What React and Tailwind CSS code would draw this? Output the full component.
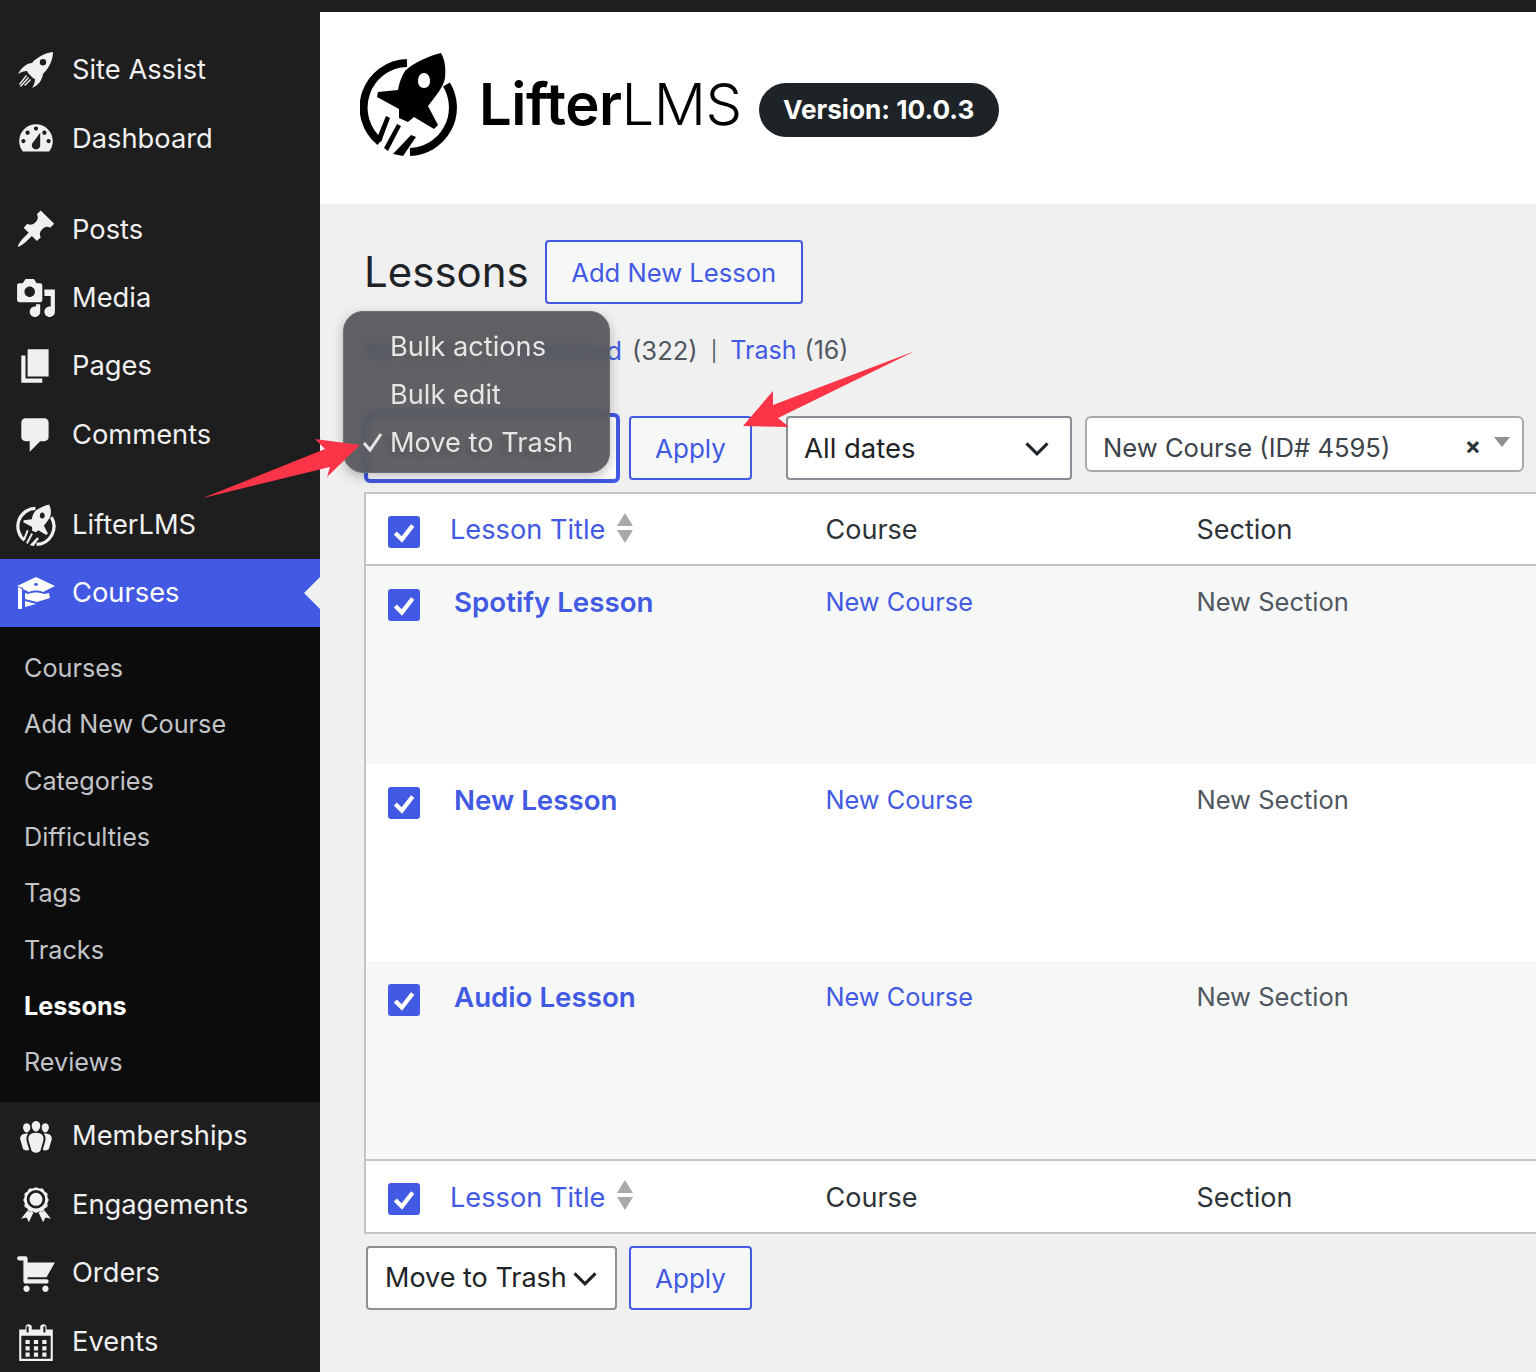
import React from "react";

const D = ({ d, className = "" }) => (
  <svg viewBox="0 0 20 20" className={`w-[42px] h-[42px] ${className}`} fill="#f0f0f1" fillRule="evenodd">
    <path d={d} />
  </svg>
);

const icons = {
  dashboard: "M3.76 16h12.48c1.1-1.37 1.76-3.11 1.76-5 0-4.42-3.58-8-8-8s-8 3.58-8 8c0 1.89.66 3.63 1.76 5zM10 4c.55 0 1 .45 1 1s-.45 1-1 1-1-.45-1-1 .45-1 1-1zM6 6c.55 0 1 .45 1 1s-.45 1-1 1-1-.45-1-1 .45-1 1-1zm8 0c.55 0 1 .45 1 1s-.45 1-1 1-1-.45-1-1 .45-1 1-1zm-5.37 5.55L12 7v6c0 1.1-.9 2-2 2s-2-.9-2-2c0-.57.24-1.08.63-1.45zM4 10c.55 0 1 .45 1 1s-.45 1-1 1-1-.45-1-1 .45-1 1-1zm12 0c.55 0 1 .45 1 1s-.45 1-1 1-1-.45-1-1 .45-1 1-1z",
  post: "M10.44 3.02l1.82-1.82 6.36 6.35-1.83 1.82c-1.05-.68-2.48-.57-3.41.36l-.75.75c-.92.93-1.04 2.35-.35 3.41l-1.83 1.82-2.41-2.41-2.8 2.79c-.42.42-3.38 2.71-3.8 2.29s1.86-3.39 2.28-3.81l2.79-2.79L4.1 9.36l1.83-1.82c1.05.69 2.48.57 3.4-.36l.75-.75c.93-.92 1.05-2.35.36-3.41z",
  media: "M13 11V4c0-.55-.45-1-1-1h-1.67L9 1H5L3.67 3H2c-.55 0-1 .45-1 1v7c0 .55.45 1 1 1h10c.55 0 1-.45 1-1zM7 4.5c1.38 0 2.5 1.12 2.5 2.5S8.38 9.5 7 9.5 4.5 8.38 4.5 7 5.62 4.5 7 4.5zM14 6h5v10.5c0 1.38-1.12 2.5-2.5 2.5S14 17.88 14 16.5s1.12-2.5 2.5-2.5c.17 0 .34.02.5.05V9h-3V6zm-4 8.05V13h2v3.5c0 1.38-1.12 2.5-2.5 2.5S7 17.88 7 16.5 8.12 14 9.5 14c.17 0 .34.02.5.05z",
  page: "M6 15V2h10v13H6zm-1 1h8v2H3V5h2v11z",
  comments: "M5 2h9c1.1 0 2 .9 2 2v7c0 1.1-.9 2-2 2h-2l-5 5v-5H5c-1.1 0-2-.9-2-2V4c0-1.1.9-2 2-2z",
  groups: "M8.03 4.46c-.29 1.28.55 3.46 1.97 3.46 1.41 0 2.25-2.18 1.96-3.46-.22-.98-1.08-1.63-1.96-1.63-.89 0-1.74.65-1.97 1.63zm-4.13.9c-.25 1.08.47 2.93 1.67 2.93s1.92-1.85 1.67-2.93c-.19-.83-.92-1.39-1.67-1.39s-1.48.56-1.67 1.39zm8.86 0c-.25 1.08.47 2.93 1.66 2.93 1.2 0 1.92-1.85 1.67-2.93-.19-.83-.92-1.39-1.67-1.39-.74 0-1.47.56-1.66 1.39zm-.59 11.43l1.25-4.3C14.2 10 12.71 8.47 10 8.47c-2.72 0-4.21 1.53-3.44 4.02l1.26 4.3C8.05 17.51 9 18 10 18c.98 0 1.94-.49 2.17-1.21zm-6.1-7.63c-.49.67-.96 1.83-.42 3.59l1.12 3.79c-.34.2-.77.31-1.2.31-.85 0-1.65-.41-1.85-1.03l-1.07-3.65c-.65-2.11.61-3.4 2.92-3.4.27 0 .54.02.79.06-.1.1-.2.22-.29.33zm8.35-.39c2.31 0 3.58 1.29 2.92 3.4l-1.07 3.65c-.2.62-1 1.03-1.85 1.03-.43 0-.86-.11-1.2-.31l1.11-3.77c.55-1.78.08-2.94-.42-3.61-.08-.11-.18-.23-.28-.33.25-.04.51-.06.79-.06z",
  awards: "M10 1.5l1.6.7 1.7-.1.8 1.5 1.4.9-.1 1.7.7 1.4-.7 1.5.1 1.7-1.4.9-.8 1.5-1.7-.1-1.6.7-1.6-.7-1.7.1-.8-1.5-1.4-.9.1-1.7-.7-1.5.7-1.4-.1-1.7 1.4-.9.8-1.5 1.7.1zM10 2.9a4.4 4.4 0 1 0 0 8.8 4.4 4.4 0 1 0 0-8.8zM10 4.2a3.1 3.1 0 1 1 0 6.2 3.1 3.1 0 1 1 0-6.2zM6 12.6l2.8 1-2.2 4.6-1.1-2.2-2.6.6zM14 12.6l-2.8 1 2.2 4.6 1.1-2.2 2.6.6z",
  cart: "M6 13h9c.55 0 1 .45 1 1s-.45 1-1 1H5c-.55 0-1-.45-1-1V4H2c-.55 0-1-.45-1-1s.45-1 1-1h3c.55 0 1 .45 1 1v2h13l-4 7H6v1zm-.5 3c.83 0 1.5.67 1.5 1.5S6.33 19 5.5 19 4 18.33 4 17.5 4.67 16 5.5 16zm9 0c.83 0 1.5.67 1.5 1.5s-.67 1.5-1.5 1.5-1.5-.67-1.5-1.5.67-1.5 1.5-1.5z",
  calendar: "M15 4h3v15H2V4h3V3c0-.41.15-.76.44-1.06.29-.29.65-.44 1.06-.44s.77.15 1.06.44c.29.3.44.65.44 1.06v1h4V3c0-.41.15-.76.44-1.06.29-.29.65-.44 1.06-.44s.77.15 1.06.44c.29.3.44.65.44 1.06v1zM6 5.5c.28 0 .5-.22.5-.5V3c0-.28-.22-.5-.5-.5s-.5.22-.5.5v2c0 .28.22.5.5.5zm8 0c.28 0 .5-.22.5-.5V3c0-.28-.22-.5-.5-.5s-.5.22-.5.5v2c0 .28.22.5.5.5zM17 18V7H3v11h14zM7 9v2H5V9h2zm2 0h2v2H9V9zm4 2V9h2v2h-2zm-6 1v2H5v-2h2zm2 0h2v2H9v-2zm4 2v-2h2v2h-2zm-6 1v2H5v-2h2zm4 2H9v-2h2v2zm4 0h-2v-2h2v2z",
};

const SiteRocket = () => (
  <svg viewBox="0 0 36 36" className="w-[36px] h-[36px]" fill="#f0f0f1">
    <path
      fillRule="evenodd"
      d="M35 0C27 1 19 5 14 11C9 11 4 15 0 22C3 20 6 19 9 19L10 21L15 26L17 27C17 30 16 33 14 36C21 33 24 28 25 22C31 16 35 8 35 0ZM25 7A3.2 3.2 0 1 1 25 13.4A3.2 3.2 0 1 1 25 7Z"
    />
    <path d="M8 23L9 24L2 33L1 32ZM10 25L11 26L3 35L2 34ZM12 27L13 28L7 34L6 33Z" />
  </svg>
);

const LifterMark = ({ className, color }) => (
  <svg viewBox="0 0 97 104" className={className} fill={color}>
    <path d="M47 11A44.5 44.5 0 0 0 20 90" fill="none" stroke={color} strokeWidth="8" />
    <path d="M86.5 32.5A44.5 44.5 0 0 1 50 100" fill="none" stroke={color} strokeWidth="8" />
    <path d="M81 1C71 3 53 11 45 19C41 25 39 32 38 38L18 40L17 45L39 57L39 66L48 70L54 65L74 77L78 73L68 54C76 44 84 34 85 26C86 16 85 8 81 1ZM64 21C68 21 70 25 70 29C70 33 68 36 64 36C60 36 58 33 58 29C58 25 60 21 64 21Z" fillRule="evenodd" />
    <path d="M26 64L30 66L21 90L17 86Z" />
    <path d="M37 72L41 74L28 99L24 96Z" />
    <path d="M51 83L56 85L43 104L33 102Z" />
  </svg>
);

const Cap = () => (
  <svg viewBox="0 0 39 32" className="w-[39px] h-[32px]" fill="#fff">
    <path
      fillRule="evenodd"
      d="M19 0L38 9L26 15C22 13 16 13 12 15L6 12L6 11L3 10L0 9ZM19 6A2 1.4 0 1 0 19 8.8A2 1.4 0 1 0 19 6Z"
    />
    <path d="M1 10L5 12V32H1Z" />
    <path d="M8 16L11 17C16 15 22 15 27 17L32 16L33 21L20 25L8 22Z" />
    <path d="M8 24L19 27L8 30Z" />
  </svg>
);

const Item = ({ icon, label, active }) => (
  <div className={`relative flex items-center pl-[15px] text-[27.3px] ${active ? "h-[68px] bg-[#4159e3] text-white" : "h-[68.4px] text-[#f0f0f1]"}`}>
    <div className="w-[42px] h-[42px] flex items-center justify-center shrink-0">{icon}</div>
    <span className="ml-[15px] mt-[1px]">{label}</span>
    {active && (
      <span className="absolute right-0 top-1/2 -translate-y-1/2 w-0 h-0 border-y-[16px] border-y-transparent border-r-[16px] border-r-[#f0f0f1]" />
    )}
  </div>
);

const Sidebar = () => (
  <aside className="w-[320px] shrink-0 bg-[#1e1e1e] pt-[24px]">
    <Item label="Site Assist" icon={<SiteRocket />} />
    <Item label="Dashboard" icon={<D d={icons.dashboard} />} />
    <div className="h-[22.5px]" />
    <Item label="Posts" icon={<D d={icons.post} />} />
    <Item label="Media" icon={<D d={icons.media} />} />
    <Item label="Pages" icon={<D d={icons.page} />} />
    <Item label="Comments" icon={<D d={icons.comments} />} />
    <div className="h-[22px]" />
    <Item label="LifterLMS" icon={<LifterMark className="w-[40px] h-[42px]" color="#f0f0f1" />} />
    <Item active label="Courses" icon={<Cap />} />
    <div className="bg-[#0c0c0c] pt-[13.4px] h-[475px]">
      {["Courses", "Add New Course", "Categories", "Difficulties", "Tags", "Tracks", "Lessons", "Reviews"].map((s) => (
        <div key={s} className={`h-[56.33px] flex items-center pl-[24px] text-[25.2px] ${s === "Lessons" ? "text-white font-bold" : "text-[#c3c4c7]"}`}>
          {s}
        </div>
      ))}
    </div>
    <Item label="Memberships" icon={<D d={icons.groups} />} />
    <Item label="Engagements" icon={<D d={icons.awards} />} />
    <Item label="Orders" icon={<D d={icons.cart} />} />
    <Item label="Events" icon={<D d={icons.calendar} />} />
  </aside>
);

const Check = () => (
  <div className="w-8 h-8 shrink-0 rounded-[3px] bg-[#4159e3] flex items-center justify-center">
    <svg viewBox="0 0 24 24" className="w-[26px] h-[26px]" fill="none" stroke="#fff" strokeWidth="4">
      <path d="M4 13L10 19L20 6" />
    </svg>
  </div>
);

const Sort = () => (
  <div className="flex flex-col gap-[4px] ml-[12px] -mt-[3px]">
    <div className="w-0 h-0 border-x-[8px] border-x-transparent border-b-[13px] border-b-[#a7aaad]" />
    <div className="w-0 h-0 border-x-[8px] border-x-transparent border-t-[13px] border-t-[#a7aaad]" />
  </div>
);

const HeadRow = ({ className, textClass = "" }) => (
  <div className={`grid grid-cols-[459.5px_371px_1fr] bg-white ${className}`}>
    <div className="flex items-center pl-[22px]">
      <div className="mt-[5px]"><Check /></div>
      <span className={`ml-[30px] text-[#4159e3] text-[27.2px] ${textClass}`}>Lesson Title</span>
      <Sort />
    </div>
    <div className={`flex items-center text-[27px] text-[#2c3338] ${textClass}`}>Course</div>
    <div className={`flex items-center text-[27px] text-[#2c3338] ${textClass}`}>Section</div>
  </div>
);

const Row = ({ title, alt, h }) => (
  <div className={`grid grid-cols-[459.5px_371px_1fr] ${h} ${alt ? "bg-[#f6f7f7]" : "bg-white"}`}>
    <div className="flex items-start pl-[22px] pt-[23px]">
      <Check />
      <a className="ml-[34px] -mt-[7px] text-[#4159e3] text-[27.7px] font-semibold">{title}</a>
    </div>
    <div className="pt-[17px] text-[#4159e3] text-[25.3px]">New Course</div>
    <div className="pt-[17px] text-[#50575e] text-[25.5px]">New Section</div>
  </div>
);

const Chevron = ({ className = "" }) => (
  <svg viewBox="0 0 24 24" className={`w-[28px] h-[28px] shrink-0 ${className}`} fill="none" stroke="#1d2327" strokeWidth="2.6">
    <path d="M3 8L12 17L21 8" />
  </svg>
);

const Apply = () => (
  <button className="w-[123px] h-16 border-2 border-[#4159e3] rounded-[4px] text-[#4159e3] text-[26px] flex items-center justify-center bg-[#f6f7f7]">
    Apply
  </button>
);

const Main = () => (
  <main className="flex-1 min-w-0 bg-[#f0f0f1] relative">
    <header className="h-[192px] bg-white flex items-center pl-[40px]">
      <LifterMark className="w-[97px] h-[104px] -mt-[8px]" color="#000" />
      <div className="ml-[22px] text-[58px] leading-none tracking-[-0.5px] text-black -mt-[8px]">
        <span className="font-semibold">Lifter</span><span className="font-light">LMS</span>
      </div>
      <div className="ml-[17px] mt-[4px] h-[54px] w-[240px] rounded-full bg-[#1d2327] text-white font-bold text-[26.2px] flex items-center justify-center">
        Version: 10.0.3
      </div>
    </header>

    <div className="pl-[45px]">
      <div className="flex items-center pt-[36px]">
        <h1 className="text-[42px] leading-[64px] text-[#1d2327] -ml-[1px]">Lessons</h1>
        <button className="ml-[16px] w-[258px] h-16 border-2 border-[#4159e3] rounded-[4px] text-[#4159e3] text-[25.6px] bg-[#f6f7f7] pt-[2px]">
          Add New Lesson
        </button>
      </div>

      <div className="mt-[27px] h-[40px] flex items-center text-[25.6px] text-[#50575e] whitespace-pre">
        <div className="w-[257px] flex justify-end">
          <span className="text-[#4159e3]">All</span> (338)  |  <span className="text-[#4159e3]">Published</span>
        </div>
        <span className="ml-[10px]">(322)</span>
        <span className="ml-[13px] text-[20px]">|</span>
        <span className="ml-[13px] text-[#4159e3] text-[25px]">Trash</span>
        <span className="ml-[8px] text-[25px]">(16)</span>
      </div>

      <div className="flex items-start mt-[45px] h-[64px]">
        <div className="w-[256px] h-[70px] -ml-[1px] -mt-[3px] border-[4px] border-[#4159e3] rounded-[6px] bg-white shrink-0 flex items-center pl-[18px] text-[27px] text-[#1d2327] whitespace-nowrap">
          Move to Trash
        </div>
        <div className="ml-[9px]"><Apply /></div>
        <div className="ml-[34px] w-[286px] h-16 border-2 border-[#8c8f94] rounded-[4px] bg-white flex items-center justify-between pl-[16px] pr-[19px] text-[27.5px] text-[#1d2327]">
          <span className="mt-[2px]">All dates</span> <Chevron />
        </div>
        <div className="ml-[13px] w-[439px] h-[56px] border-2 border-[#a7aaad] rounded-[6px] bg-white flex items-center pl-[16px] pr-[12px] text-[25.6px] text-[#3c434a]">
          <span className="flex-1 mt-[8px]">New Course (ID# 4595)</span>
          <span className="font-bold text-[#2c3338] text-[24px] mr-[13px] mt-[3px]">×</span>
          <div className="w-0 h-0 border-x-[8px] border-x-transparent border-t-[10px] border-t-[#8c8f94] -mt-[4px]" />
        </div>
      </div>

      <div className="mt-[12px] -ml-[1px] border-y-2 border-l-2 border-[#c3c4c7]">
        <HeadRow className="h-[72px] border-b-2 border-[#c3c4c7]" textClass="mt-[3px]" />
        <Row title="Spotify Lesson" alt h="h-[198px]" />
        <Row title="New Lesson" h="h-[197px]" />
        <Row title="Audio Lesson" alt h="h-[198px]" />
        <HeadRow className="h-[73px] border-t-2 border-[#c3c4c7]" textClass="mt-[3px]" />
      </div>

      <div className="flex items-start mt-[12px] pl-[1px]">
        <div className="w-[251px] h-16 border-2 border-[#8c8f94] rounded-[4px] bg-white flex items-center pl-[17px] text-[27px] text-[#1d2327] whitespace-nowrap">
          Move to Trash<Chevron className="ml-[4px]" />
        </div>
        <div className="ml-[12px]"><Apply /></div>
      </div>
    </div>
  </main>
);

const Overlays = () => (
  <>
    <div className="absolute left-[343px] top-[311px] w-[267px] h-[162px] rounded-[20px] bg-[#505154]/90 backdrop-blur-[4px] border border-[#6d6e72] shadow-[0_4px_12px_rgba(0,0,0,0.25)] text-[#e6e6e6] text-[27.2px] pt-[11px]">
      <div className="h-[48px] flex items-center pl-[46px]">Bulk actions</div>
      <div className="h-[48px] flex items-center pl-[46px]">Bulk edit</div>
      <div className="h-[48px] flex items-center pl-[46px] relative">
        <svg viewBox="0 0 20 20" className="absolute left-[19px] top-[12px] w-[20px] h-[22px]" fill="none" stroke="#e6e6e6" strokeWidth="3">
          <path d="M1 11L7 18L18 2" />
        </svg>
        Move to Trash
      </div>
    </div>
    <svg className="absolute left-0 top-0 w-[1536px] h-[1372px] pointer-events-none" viewBox="0 0 1536 1372" fill="#fb3447">
      <polygon points="203,498 325,449 315,439 360,445 327,477 330,467" />
      <polygon points="915,351 773,405 773,391 743,426 789,427 778,418" />
    </svg>
  </>
);

export default function App() {
  return (
    <div className="relative w-[1536px] h-[1372px] overflow-hidden font-['Inter',sans-serif] bg-[#f0f0f1]">
      <div className="h-3 bg-[#1e1e1e]" />
      <div className="flex h-[1360px]">
        <Sidebar />
        <Main />
      </div>
      <Overlays />
    </div>
  );
}
